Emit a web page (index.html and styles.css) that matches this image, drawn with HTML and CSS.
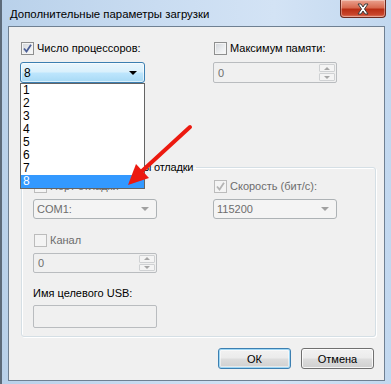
FILE: index.html
```html
<!DOCTYPE html>
<html lang="ru">
<head>
<meta charset="utf-8">
<link rel="stylesheet" href="styles.css">
</head>
<body>
<div class="window">
  <div class="titlebar">
    <span class="title">Дополнительные параметры загрузки</span>
    <span class="close">
      <svg width="16" height="12" viewBox="0 0 16 12"><path d="M3 1 L6 1 L8 4 L10 1 L13 1 L9.5 6 L13 11 L10 11 L8 8 L6 11 L3 11 L6.5 6 Z" fill="#fff" stroke="#3b3b3b" stroke-width="1" stroke-linejoin="round"/></svg>
    </span>
  </div>
  <div class="client">
    <div class="top">
      <div class="col">
        <div class="chk">
          <span class="box"><svg width="9" height="9" viewBox="0 0 9 9"><path d="M1 4.5 L3.5 7.5 L8 0.8" fill="none" stroke="#4c5f96" stroke-width="1.8"/></svg></span>
          <span class="t">Число процессоров:</span>
        </div>
        <div class="combo focus"><span>8</span><span class="tri"></span></div>
      </div>
      <div class="col">
        <div class="chk">
          <span class="box"></span>
          <span class="t">Максимум памяти:</span>
        </div>
        <div class="spin"><span class="val">0</span><span class="btns"><span class="sb"><i class="up"></i></span><span class="sb"><i class="down"></i></span></span></div>
      </div>
    </div>

    <fieldset class="group">
      <legend>Глобальные параметры отладки</legend>
      <div class="gcols">
        <div class="col">
          <div class="chk dis"><span class="box"></span><span class="t">Порт отладки</span></div>
          <div class="combo dis"><span>COM1:</span><span class="tri"></span></div>
          <div class="chk dis row3"><span class="box"></span><span class="t">Канал</span></div>
          <div class="spin"><span class="val">0</span><span class="btns"><span class="sb"><i class="up"></i></span><span class="sb"><i class="down"></i></span></span></div>
          <div class="lbl">Имя целевого USB:</div>
          <div class="text"></div>
        </div>
        <div class="col">
          <div class="chk dis"><span class="box"><svg width="9" height="9" viewBox="0 0 9 9"><path d="M1 4.5 L3.5 7.5 L8 0.8" fill="none" stroke="#b4b4b4" stroke-width="1.8"/></svg></span><span class="t">Скорость (бит/с):</span></div>
          <div class="combo dis"><span>115200</span><span class="tri"></span></div>
        </div>
      </div>
    </fieldset>

    <div class="buttons">
      <span class="btn def">ОК</span>
      <span class="btn">Отмена</span>
    </div>

    <ul class="list">
      <li>1</li><li>2</li><li>3</li><li>4</li><li>5</li><li>6</li><li>7</li><li class="sel">8</li>
    </ul>
  </div>
  <svg class="annot" width="391" height="384" viewBox="0 0 391 384">
    <line x1="190" y1="127" x2="141" y2="172" stroke="#ec1a10" stroke-width="4" stroke-linecap="round"/>
    <polygon points="128,185 136,164 149,178" fill="#ec1a10"/>
  </svg>
</div>
</body>
</html>
```

FILE: styles.css
```css
* { box-sizing: border-box; }
html, body { margin: 0; padding: 0; }
body {
  width: 391px; height: 384px; overflow: hidden;
  font-family: "Liberation Sans", "Noto Sans", sans-serif;
  font-size: 11px; color: #000;
}
.window {
  position: relative;
  width: 391px; height: 384px;
  background: linear-gradient(90deg, #b9d1ea 0%, #c9dcf1 40%, #d3e3f5 70%, #c2d8ef 100%);
  border-left: 2px solid #5d6b7a;
  display: flex; flex-direction: column;
}
.titlebar {
  height: 26px; display: flex; align-items: flex-start;
  padding-left: 8px;
}
.title { margin-top: 6px; font-size: 11.4px; line-height: 16px; color: #000; white-space: nowrap; }
.close {
  margin-left: auto; margin-right: 5px;
  width: 46px; height: 18px;
  border: 1px solid #6b2a20; border-top: none;
  border-radius: 0 0 4px 4px;
  background: linear-gradient(#eba28f 0%, #d86a50 45%, #b92e14 55%, #c8442a 85%, #e07c62 100%);
  display: flex; align-items: center; justify-content: center;
  box-shadow: inset 0 0 0 1px rgba(255,255,255,0.35);
}
.client {
  position: relative;
  margin-left: 6px;
  width: 377px; height: 355px;
  background: #f0f0f0;
  border: 1px solid #6f8092;
  padding: 14px 0 0 11px;
}
.top { display: grid; grid-template-columns: 125px 124px; column-gap: 68px; }
.col { display: flex; flex-direction: column; }
.chk { display: flex; align-items: center; height: 15px; line-height: 15px; gap: 3px; padding-left: 1px; white-space: nowrap; }
.t { white-space: nowrap; }
.box {
  width: 13px; height: 13px; flex: none;
  border: 1px solid #8e8f8f;
  background: linear-gradient(135deg, #d0d3d8 0%, #eceef0 60%, #fbfbfb 100%);
  box-shadow: inset 0 0 0 1px #f4f4f4;
  display: flex; align-items: center; justify-content: center;
}
.chk.dis { color: #6d6d6d; }
.chk.dis .box { border-color: #bcbcbc; background: #f4f4f4; box-shadow: none; }
.combo {
  margin-top: 6px;
  height: 21px; border-radius: 3px;
  display: flex; align-items: center; justify-content: space-between;
  padding: 0 5px 0 3px;
}
.combo.focus {
  border: 1px solid #3c7fb1;
  background: linear-gradient(#eaf6fd 0%, #d9f0fc 48%, #bee6fd 52%, #a7d9f5 100%);
  box-shadow: inset 0 0 0 1px rgba(255,255,255,0.6);
  font-size: 12px;
}
.tri { width: 0; height: 0; border-left: 4px solid transparent; border-right: 4px solid transparent; border-top: 4px solid #000; margin-right: 2px; }
.combo.dis { border: 1px solid #adb2b5; background: #f4f4f4; color: #6d6d6d; height: 20px; margin-top: 5px; }
.combo.dis .tri { border-top-color: #a0a0a0; }
.spin {
  margin-top: 6px; height: 21px;
  border: 1px solid #b9bcbf; border-radius: 2px; background: #f0f0f0;
  display: flex; align-items: center; justify-content: space-between;
  color: #6d6d6d; padding-left: 4px;
}
.btns { display: flex; flex-direction: column; gap: 1px; width: 17px; height: 100%; padding: 1px 1px 1px 0; }
.sb { flex: 1; border: 1px solid #cfd1d3; border-radius: 1px; background: #f4f4f4; display: flex; align-items: center; justify-content: center; }
.sb i { width: 0; height: 0; border-left: 3px solid transparent; border-right: 3px solid transparent; }
.sb i.up { border-bottom: 3px solid #a6a6a6; }
.sb i.down { border-top: 3px solid #a6a6a6; }

.group {
  margin: 77px 0 0 1px; width: 355px;
  border: 1px solid #d5dfe5; border-radius: 3px;
  box-shadow: 1px 1px 0 #fff, inset 1px 1px 0 #fff;
  padding: 4px 0 8px 11px;
}
.group legend { padding: 0 3px; margin-left: -3px; line-height: 15px; color: #000; white-space: nowrap; letter-spacing: -0.2px; }
.gcols { display: grid; grid-template-columns: 124px 124px; column-gap: 56px; }
.row3 { margin-top: 14px; }
.group .spin { margin-top: 5px; height: 20px; }
.lbl { margin-top: 13px; line-height: 15px; color: #000; white-space: nowrap; }
.text { margin-top: 4px; height: 23px; border: 1px solid #b9bcbf; border-radius: 2px; background: #f0f0f0; }

.buttons { display: flex; justify-content: flex-end; gap: 10px; margin-top: 11px; padding-right: 10px; }
.btn {
  width: 73px; height: 21px; border-radius: 3px;
  border: 1px solid #707070;
  background: linear-gradient(#f2f2f2 0%, #ebebeb 48%, #dddddd 52%, #cfcfcf 100%);
  box-shadow: inset 0 0 0 1px rgba(255,255,255,0.8);
  display: flex; align-items: center; justify-content: center;
}
.btn.def {
  border-color: #3c7fb1;
  background: linear-gradient(#f2f2f2 0%, #ebebeb 48%, #dddddd 52%, #cfcfcf 100%);
  box-shadow: inset 0 0 0 1px #9fd7f5, inset 0 0 0 2px rgba(255,255,255,0.5);
}

.list {
  position: absolute; left: 11px; top: 56px;
  width: 125px; margin: 0; padding: 0; list-style: none;
  background: #fff; border: 1px solid #646464;
  font-size: 12px;
}
.list li { height: 13px; line-height: 13px; padding-left: 2px; overflow: hidden; }
.list li.sel { background: #3399ff; color: #fff; }
.annot { position: absolute; left: -2px; top: 0; pointer-events: none; }
```
